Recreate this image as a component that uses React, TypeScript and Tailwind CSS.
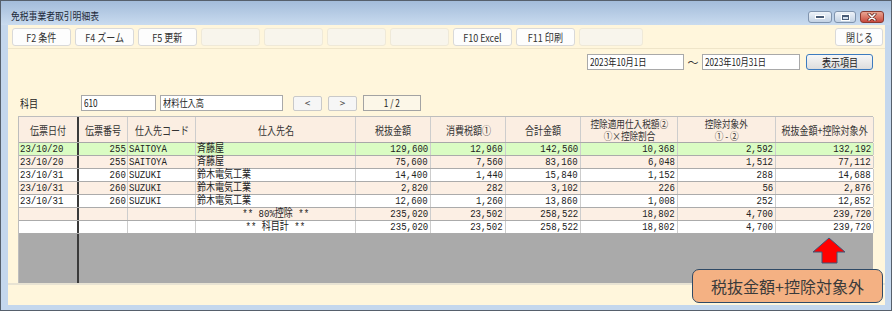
import React from "react";

const MONO = "font-['Liberation_Mono','Noto_Sans_CJK_JP',monospace]";

function S({ children, o = "origin-left", className = "" }: { children: React.ReactNode; o?: string; className?: string }) {
  return <span className={`inline-block whitespace-nowrap scale-x-[0.82] ${o} ${className}`}>{children}</span>;
}

const W = ["w-[60px]", "w-[49px]", "w-[68px]", "w-[160px]", "w-[75px]", "w-[75px]", "w-[75px]", "w-[97px]", "w-[98px]", "w-[98px]"];

const headers: (string | string[])[] = [
  "伝票日付",
  "伝票番号",
  "仕入先コード",
  "仕入先名",
  "税抜金額",
  "消費税額①",
  "合計金額",
  ["控除適用仕入税額②", "①×控除割合"],
  ["控除対象外", "① - ②"],
  "税抜金額+控除対象外",
];

type Row = { d: string; n: string; c: string; name: string; sum?: boolean; v: string[]; bg: string };

const rows: Row[] = [
  { d: "23/10/20", n: "255", c: "SAITOYA", name: "斉藤屋", v: ["129,600", "12,960", "142,560", "10,368", "2,592", "132,192"], bg: "bg-[#dafcc3]" },
  { d: "23/10/20", n: "255", c: "SAITOYA", name: "斉藤屋", v: ["75,600", "7,560", "83,160", "6,048", "1,512", "77,112"], bg: "bg-[#fcefe4]" },
  { d: "23/10/31", n: "260", c: "SUZUKI", name: "鈴木電気工業", v: ["14,400", "1,440", "15,840", "1,152", "288", "14,688"], bg: "bg-white" },
  { d: "23/10/31", n: "260", c: "SUZUKI", name: "鈴木電気工業", v: ["2,820", "282", "3,102", "226", "56", "2,876"], bg: "bg-[#fcefe4]" },
  { d: "23/10/31", n: "260", c: "SUZUKI", name: "鈴木電気工業", v: ["12,600", "1,260", "13,860", "1,008", "252", "12,852"], bg: "bg-white" },
  { d: "", n: "", c: "", name: "** 80%控除 **", sum: true, v: ["235,020", "23,502", "258,522", "18,802", "4,700", "239,720"], bg: "bg-[#fcefe4]" },
  { d: "", n: "", c: "", name: "** 科目計 **", sum: true, v: ["235,020", "23,502", "258,522", "18,802", "4,700", "239,720"], bg: "bg-white" },
];

function Input({ w, children }: { w: string; children: React.ReactNode }) {
  return (
    <div className={`${w} h-[16px] shrink-0 bg-white border border-[#a9a9a9] flex items-center pl-[2px] text-[10px] leading-[12px] text-[#222]`}>
      <S>{children}</S>
    </div>
  );
}

function TitleBar() {
  return (
    <div className="h-[24px] shrink-0 flex items-start bg-linear-to-b from-[#a3bcda] to-[#c9dbef]">
      <div className="pl-[10px] pt-[9px] text-[10px] leading-[12px] text-[#1d2a3a]">
        <S className="scale-x-[0.88]">免税事業者取引明細表</S>
      </div>
      <div className="ml-auto flex items-start pt-[10px] pr-[7px]">
        <div className="w-[24px] h-[12px] rounded-[3px] border border-[#7f93ad] bg-linear-to-b from-[#eef3f9] to-[#c3d2e4] flex items-center justify-center">
          <div className="w-[8px] h-[2px] bg-[#4a5d78] outline outline-1 outline-white" />
        </div>
        <div className="ml-[2px] w-[22px] h-[12px] rounded-[3px] border border-[#7f93ad] bg-linear-to-b from-[#eef3f9] to-[#c3d2e4] flex items-center justify-center">
          <div className="w-[7px] h-[5px] border border-[#4a5d78] border-t-2 outline outline-1 outline-white" />
        </div>
        <div className="ml-[4px] w-[24px] h-[12px] rounded-[3px] border border-[#8a3a30] bg-linear-to-b from-[#e9a593] to-[#c8473c] flex items-center justify-center">
          <svg width="10" height="8" viewBox="0 0 10 8">
            <path d="M2 1 L8 7 M8 1 L2 7" stroke="#5a2018" strokeWidth="3" strokeLinecap="round" />
            <path d="M2 1 L8 7 M8 1 L2 7" stroke="#ffffff" strokeWidth="1.6" strokeLinecap="round" />
          </svg>
        </div>
      </div>
    </div>
  );
}

const tb = ["F2 条件", "F4 ズーム", "F5 更新", "", "", "", "", "F10 Excel", "F11 印刷", ""];

function Toolbar() {
  return (
    <div className="h-[24px] shrink-0 flex items-start pt-[3px] pl-[4px] pr-[2px] gap-[4px] border-b border-[#efe5c9]">
      {tb.map((t, i) => (
        <div
          key={i}
          className={`${i === 9 ? "w-[64px]" : "w-[59px]"} h-[18px] rounded-[3px] flex items-center justify-center text-[11px] leading-[12px] text-[#333] ${
            t ? "bg-[#fdfdfd] border border-[#d9d9d9]" : "bg-[#f8f5ec] border border-[#efe9d8]"
          }`}
        >
          {t && <S o="origin-center">{t}</S>}
        </div>
      ))}
      <div className="ml-auto w-[48px] h-[18px] rounded-[3px] bg-[#fdfdfd] border border-[#d9d9d9] flex items-center justify-center text-[11px] leading-[12px] text-[#333]">
        <S o="origin-center">閉じる</S>
      </div>
    </div>
  );
}

function DateRow() {
  return (
    <div className="mt-[5px] h-[16px] shrink-0 flex items-center justify-end pr-[12px]">
      <Input w="w-[97px]">2023年10月1日</Input>
      <div className="w-[18px] text-center text-[11px] leading-[12px] text-[#333]">～</div>
      <Input w="w-[98px]">2023年10月31日</Input>
      <div className="ml-[6px] w-[67px] h-[16px] rounded-[3px] border border-[#3d7bbf] bg-linear-to-b from-[#f7f7f7] to-[#dddddd] flex items-center justify-center text-[11px] leading-[12px] text-[#222]">
        <S o="origin-center">表示項目</S>
      </div>
    </div>
  );
}

function SubjectRow() {
  return (
    <div className="mt-[25px] h-[16px] shrink-0 flex items-center">
      <div className="w-[73px] shrink-0 pl-[12px] text-[11px] leading-[12px] text-[#222]">
        <S>科目</S>
      </div>
      <Input w="w-[75px]">610</Input>
      <div className="ml-[4px]">
        <Input w="w-[123px]">材料仕入高</Input>
      </div>
      <div className="ml-[10px] w-[29px] h-[15px] rounded-[2px] bg-[#f6f6f6] border border-[#c9c9c9] flex items-center justify-center text-[10px] leading-[12px] text-[#444]">
        &lt;
      </div>
      <div className="ml-[6px] w-[29px] h-[15px] rounded-[2px] bg-[#f6f6f6] border border-[#c9c9c9] flex items-center justify-center text-[10px] leading-[12px] text-[#444]">
        &gt;
      </div>
      <div className="ml-[6px] w-[58px] h-[16px] bg-[#fcf7e8] border border-[#a3a3a3] flex items-center justify-center text-[10px] leading-[12px] text-[#222]">
        <S o="origin-center">1 / 2</S>
      </div>
    </div>
  );
}

function cellBorder(i: number) {
  return i === 0 ? "border-r-2 border-[#3a3a3a]" : "border-r border-[#cdcdcd]";
}

function Table() {
  return (
    <div className="mt-[5px] ml-[10px] w-[855px] flex-1 min-h-0 flex flex-col border-l border-t border-[#bdbdbd]">
      <div className="h-[26px] shrink-0 flex bg-[#fbeee2] border-b border-[#a8a8a8]">
        {headers.map((h, i) => (
          <div
            key={i}
            className={`${W[i]} shrink-0 flex flex-col items-center justify-center text-[#333] ${Array.isArray(h) ? "text-[10.5px] leading-[12px]" : "text-[11px] leading-[12px]"} ${cellBorder(i)}`}
          >
            {Array.isArray(h) ? (
              h.map((l, k) => (
                <S key={k} o="origin-center">
                  {l}
                </S>
              ))
            ) : (
              <S o="origin-center">{h}</S>
            )}
          </div>
        ))}
      </div>
      {rows.map((r, ri) => (
        <div key={ri} className={`h-[13px] shrink-0 flex border-b border-[#ababab] ${r.bg} ${MONO} text-[11px] leading-[12px] text-[#222]`}>
          <div className={`${W[0]} shrink-0 pl-[1px] ${cellBorder(0)}`}>
            <S>{r.d}</S>
          </div>
          <div className={`${W[1]} shrink-0 pr-[1px] text-right ${cellBorder(1)}`}>
            <S o="origin-right">{r.n}</S>
          </div>
          <div className={`${W[2]} shrink-0 pl-[1px] ${cellBorder(2)}`}>
            <S>{r.c}</S>
          </div>
          <div className={`${W[3]} shrink-0 ${r.sum ? "flex justify-center" : "pl-[1px]"} ${cellBorder(3)}`}>
            <S o={r.sum ? "origin-center" : "origin-left"}>{r.name}</S>
          </div>
          {r.v.map((v, k) => (
            <div key={k} className={`${W[k + 4]} shrink-0 pr-[2px] text-right ${cellBorder(k + 4)}`}>
              <S o="origin-right">{v}</S>
            </div>
          ))}
        </div>
      ))}
      <div className="flex-1 min-h-0 flex bg-[#aaaaaa]">
        <div className="w-[60px] border-r-2 border-[#3a3a3a]" />
      </div>
    </div>
  );
}

export default function App() {
  return (
    <div className="relative w-[892px] h-[311px] overflow-hidden border border-[#56606c] bg-[#c4d7ed] flex flex-col font-['Noto_Sans_CJK_JP',sans-serif] text-[#222]">
      <TitleBar />
      <div className="flex-1 min-h-0 ml-[7px] mr-[6px] mb-[5px] bg-[#fff6dc] flex flex-col">
        <Toolbar />
        <DateRow />
        <SubjectRow />
        <Table />
        <div className="h-[22px] shrink-0 border-t-2 border-[#e8e3d3]" />
      </div>
      <svg className="absolute left-[811px] top-[236px]" width="34" height="28" viewBox="0 0 34 28">
        <polygon points="17,1 1,15 10,15 10,26 25,26 25,15 33,15" fill="#ff0000" stroke="#3f5577" strokeWidth="1" strokeLinejoin="miter" />
      </svg>
      <div className="absolute left-[691px] top-[268px] w-[191px] h-[34px] rounded-[7px] bg-[#f4b183] border border-[#2f4a66] flex items-center justify-center text-[16px] leading-[20px] text-[#3a3a3a]">
        税抜金額+控除対象外
      </div>
    </div>
  );
}
